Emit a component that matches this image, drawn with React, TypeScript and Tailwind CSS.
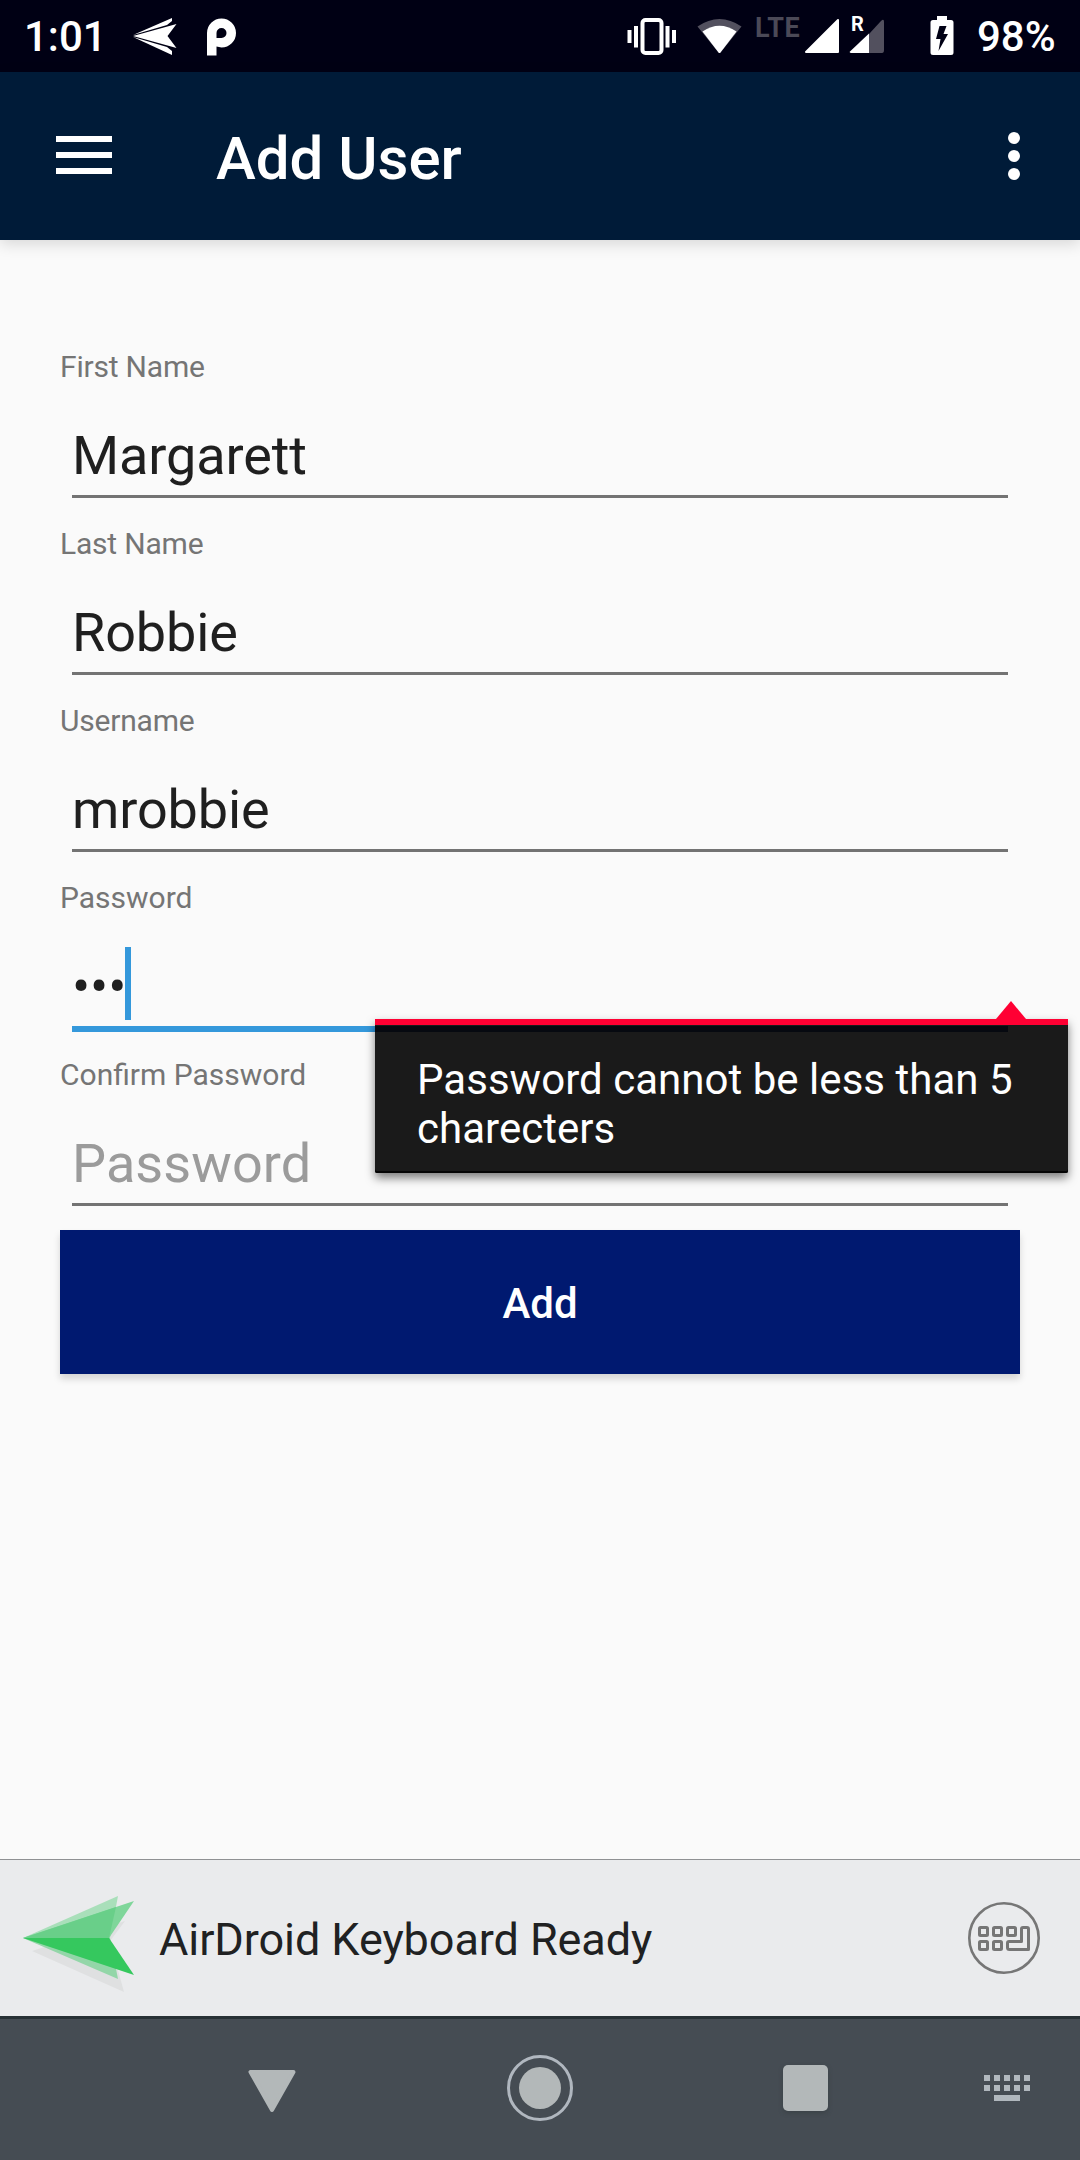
import React from 'react';

function StatusBar() {
  return (
    <div className="flex h-[72px] items-center bg-[#000014] pt-[2px] text-[42px] leading-[48px] font-medium text-white">
      <div className="ml-[24px] w-[109px]">1:01</div>
      <svg className="-mt-[2px] h-[40px] w-[46px]" viewBox="0 0 46 40" fill="#fff">
        <path d="M0 20 43.500 8 34.500 20 43.500 32Z" />
        <path d="M0 19 39 2 39 5 34 9Z" />
        <path d="M0 21 34 31 39 35 39 39Z" />
      </svg>
      <svg className="-mt-[1px] ml-[27px] h-[38px] w-[32px]" viewBox="0 0 32 38">
        <path fill="#fff" fillRule="evenodd" d="M1 37.500V15A14.500 14.500 0 1 1 15.500 29.500L10.500 28.500V37.500ZM10.500 20H15.500A5 5 0 1 0 10.500 15Z" />
      </svg>
      <svg className="-mt-[1px] ml-auto h-[40px] w-[50px]" viewBox="0 0 50 40" fill="#fff">
        <rect x="15.500" y="3" width="19" height="33" rx="3" fill="none" stroke="#fff" strokeWidth="4" />
        <path d="M0.500 13h4v13h-4zM7 9h4v21.500h-4zM38.500 9h4v21.500h-4zM45 13h4v13h-4z" />
      </svg>
      <svg className="-mt-[2px] ml-[19px] h-[40px] w-[48px]" viewBox="0 0 48 40">
        <path fill="#52505e" d="M1.500 10.500Q23.500-4.500 45.500 10.500L24.500 36.500Q23.500 37.500 22.500 36.500Z" />
        <path fill="#fff" d="M6.500 15.500Q23.500 4 40.500 15.500L24.500 36.500Q23.500 37.500 22.500 36.500Z" />
      </svg>
      <div className="mb-[19px] ml-[11px] w-[46px] text-[27px] leading-[28px] font-bold tracking-[0.6px] text-[#4b4957]">
        LTE
      </div>
      <svg className="-mt-[1px] ml-[3px] h-[40px] w-[36px]" viewBox="0 0 36 40">
        <path fill="#fff" stroke="#fff" strokeWidth="2" strokeLinejoin="round" d="M2 35 34 3V35Z" />
      </svg>
      <div className="relative -mt-[1px] ml-[9px] h-[40px] w-[36px]">
        <svg className="h-[40px] w-[36px]" viewBox="0 0 36 40">
          <path fill="#52505e" d="M20 17 32 4Q35 1 35 5V33Q35 36 33 36H20Z" />
          <path fill="#fff" d="M20 16.500V36H2Q0 35.500 1 34.500Z" />
        </svg>
        <div className="absolute -top-[1px] left-[2px] text-[20px] leading-[16px] font-bold">R</div>
      </div>
      <svg className="-mt-[2px] ml-[45px] h-[40px] w-[24px]" viewBox="0 0 24 40">
        <path fill="#fff" d="M7 0H17V4H21Q23.500 4 23.500 6.500V36.500Q23.500 39 21 39H3Q.5 39 .5 36.500V6.500Q.5 4 3 4H7Z" />
        <path fill="#000014" d="M9.500 10 6 23H10.500L8.500 35 18 18H13.500L16.500 10Z" />
      </svg>
      <div className="ml-[23px] w-[103px]">98%</div>
    </div>
  );
}

function Header() {
  return (
    <header className="relative z-10 flex h-[168px] items-center bg-[#001b38] text-white shadow-[0_4px_14px_rgba(0,0,0,0.14)]">
      <div className="mb-[2px] ml-[56px] flex w-[56px] flex-col gap-[10px]">
        <div className="h-[6px] bg-white" />
        <div className="h-[6px] bg-white" />
        <div className="h-[6px] bg-white" />
      </div>
      <h1 className="mt-[5px] ml-[104px] text-[60px] leading-[70px] font-medium">Add User</h1>
      <div className="mr-[60px] ml-auto flex flex-col gap-[6px]">
        <div className="size-[12px] rounded-full bg-white" />
        <div className="size-[12px] rounded-full bg-white" />
        <div className="size-[12px] rounded-full bg-white" />
      </div>
    </header>
  );
}

function ErrorPopup() {
  return (
    <div className="absolute top-[139px] left-[315px] z-20 h-[154px] w-[693px] rounded-b-[2px] border-t-[6px] border-[#ff0033] bg-[#1a1a1a] pt-[30px] pl-[42px] text-[42px] leading-[49px] text-white shadow-[0_5px_10px_rgba(0,0,0,0.5),inset_0_-2px_0_#050505]">
      <svg className="absolute -top-[24px] right-[42px] h-[19px] w-[30px]" viewBox="0 0 30 19">
        <path fill="#ff0033" d="M15 0 30 18V19H0V18Z" />
      </svg>
      <div className="absolute top-px left-0 h-[6px] w-[633px] bg-[#060910]" />
      <span className="relative tracking-[0.03px]">
        Password cannot be less than 5<br />charecters
      </span>
    </div>
  );
}

type FieldProps = {
  label: string;
  value: string;
  labelClass?: string;
  placeholder?: boolean;
  focused?: boolean;
};

function Field({ label, value, labelClass = '', placeholder, focused }: FieldProps) {
  return (
    <div className="relative h-[149px]">
      <div className={`h-[36px] text-[30px] leading-[36px] text-[#757575] ${labelClass}`}>{label}</div>
      <div className="mx-[12px] mt-[39px] flex h-[64px] items-center text-[54px] leading-[64px]">
        <span className={placeholder ? 'tracking-[0.1px] text-[#9b9b9b]' : 'tracking-[-0.1px] text-[#1f1f1f]'}>
          {value}
        </span>
        {focused && <span className="-mt-[7px] -ml-[1px] h-[73px] w-[6px] shrink-0 bg-[#3498db]" />}
      </div>
      <div
        className={
          focused ? 'mx-[12px] mt-[7px] h-[6px] bg-[#3498db]' : 'mx-[12px] mt-[7px] h-[3px] bg-[#737373]'
        }
      />
      {focused && <ErrorPopup />}
    </div>
  );
}

function AirDroidLogo() {
  return (
    <svg className="mt-[14px] ml-[23px] h-[100px] w-[114px]" viewBox="0 0 114 100">
      <path fill="#dfe0e1" d="M9 56 102 26 87 46 101 97Z" />
      <path fill="#a9dfba" d="M0 43 95 1 87 43Z" />
      <path fill="#93d6a8" d="M0 43 87 43 95 84Z" />
      <path fill="#7fd69a" d="M0 43 111 6 86 43Z" />
      <path fill="#69cf89" d="M0 43 93 12 86 43Z" />
      <path fill="#35c85e" d="M0 43H86L111 80Z" />
    </svg>
  );
}

function KeyboardBar() {
  return (
    <div className="flex h-[157px] items-center border-t border-[#8f9193] bg-[#eaebed]">
      <AirDroidLogo />
      <div className="mt-[4px] ml-[22px] text-[45px] leading-[54px] tracking-[-0.08px] text-[#202122]">
        AirDroid Keyboard Ready
      </div>
      <svg className="mr-[40px] ml-auto h-[72px] w-[72px]" viewBox="0 0 72 72" fill="none" stroke="#767676">
        <circle cx="36" cy="36" r="34.700" strokeWidth="2.600" />
        <g strokeWidth="3">
          <rect x="11.500" y="25.500" width="8" height="8" rx="1" />
          <rect x="25.500" y="25.500" width="8" height="8" rx="1" />
          <rect x="39.500" y="25.500" width="8" height="8" rx="1" />
          <rect x="11.500" y="39.500" width="8" height="8" rx="1" />
          <rect x="25.500" y="39.500" width="8" height="8" rx="1" />
          <path strokeLinejoin="round" d="M53.500 39.500V27Q53.500 25.500 55 25.500H59Q60.500 25.500 60.500 27V47.500H41.500Q39.500 47.500 39.500 45.500V41Q39.500 39.500 41 39.500Z" />
        </g>
      </svg>
    </div>
  );
}

const keyColumns = [0, 10, 20, 30, 40];

function NavBar() {
  return (
    <nav className="flex h-[144px] items-center border-t-[3px] border-[#283136] bg-[#454c53]">
      <svg className="mt-[3px] ml-[248px] h-[44px] w-[48px]" viewBox="0 0 48 44">
        <path fill="#b3b8b9" stroke="#b3b8b9" strokeWidth="4" strokeLinejoin="round" d="M2.500 3H45.500L24 41Z" />
      </svg>
      <svg className="-mt-[3px] ml-[211px] h-[66px] w-[66px]" viewBox="0 0 66 66">
        <circle cx="33" cy="33" r="31.500" fill="none" stroke="#b0b7bf" strokeWidth="3" />
        <circle cx="33" cy="33" r="21" fill="#b3b8b9" />
      </svg>
      <div className="-mt-[3px] ml-[210px] h-[46px] w-[45px] rounded-[5px] bg-[#b3b8b9] shadow-[0_2px_4px_rgba(50,58,60,0.5)]" />
      <svg className="-mt-[2px] ml-[156px] h-[27px] w-[46px]" viewBox="0 0 46 27" fill="#b0b7bd">
        {keyColumns.map((x) => (
          <g key={x}>
            <rect x={x} y="0" width="6" height="6" />
            <rect x={x} y="10" width="6" height="6" />
          </g>
        ))}
        <rect x="10" y="20" width="26" height="6" />
      </svg>
    </nav>
  );
}

export default function App() {
  return (
    <div className="flex h-[2160px] w-[1080px] flex-col overflow-hidden bg-[#fafafa] font-[Roboto,sans-serif]">
      <StatusBar />
      <Header />
      <main className="flex-1 px-[60px] pt-[109px]">
        <div className="flex flex-col gap-[28px]">
          <Field label="First Name" value="Margarett" labelClass="tracking-[-0.2px]" />
          <Field label="Last Name" value="Robbie" labelClass="tracking-[-0.2px]" />
          <Field label="Username" value="mrobbie" labelClass="tracking-[-0.2px]" />
          <Field label="Password" value="•••" focused />
          <Field label="Confirm Password" value="Password" placeholder />
        </div>
        <button className="mt-[24px] block h-[144px] w-full bg-[#001970] pt-[3px] text-[42px] leading-[48px] font-medium text-white shadow-[0_5px_7px_rgba(0,0,0,0.15)]">
          Add
        </button>
      </main>
      <KeyboardBar />
      <NavBar />
    </div>
  );
}
